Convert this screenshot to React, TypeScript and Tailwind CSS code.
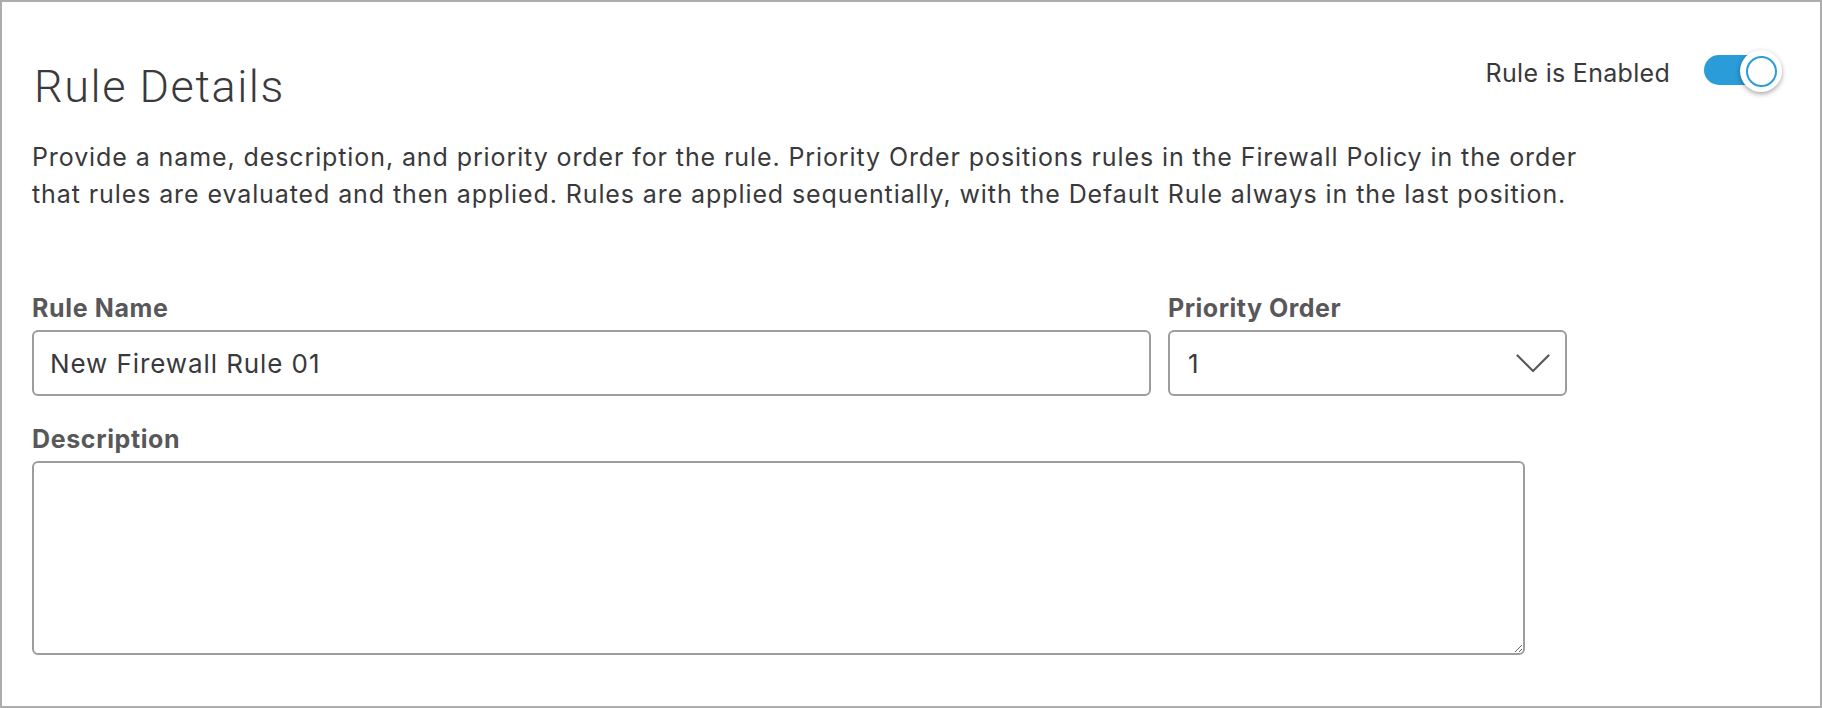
import React from "react";

export default function App() {
  return (
    <div className="w-[1822px] h-[708px] box-border border-2 border-[#adadad] bg-white pl-[30px] pt-[62px] font-['Inter','Liberation_Sans',Arial,sans-serif] text-[#39393b]">
      <div className="flex items-start justify-between pr-[38px]">
        <h1 className="font-['Roboto',sans-serif] font-light text-[45px] leading-[45px] tracking-[0.035em] text-[#3a3a3c] pl-[2px]">
          Rule Details
        </h1>
        <div className="flex items-center -mt-[14px]">
          <span className="text-[25px] leading-[30px] mt-[3px] tracking-[0.012em]">Rule is Enabled</span>
          <div className="relative ml-[34px] w-[78px] h-[42px]">
            <div className="absolute left-0 top-[5px] w-[66px] h-[30px] rounded-full bg-[#2a9cd8]" />
            <div className="absolute right-0 top-0 w-[42px] h-[42px] rounded-full bg-white shadow-[0_2px_5px_rgba(0,0,0,0.35)] flex items-center justify-center">
              <div className="w-[31px] h-[31px] rounded-full border-2 border-[#2a9cd8]" />
            </div>
          </div>
        </div>
      </div>

      <p className="mt-[30px] text-[25px] leading-[37px] tracking-[0.9px]">
        Provide a name, description, and priority order for the rule. Priority Order positions rules in the Firewall Policy in the order
        <br />
        that rules are evaluated and then applied. Rules are applied sequentially, with the Default Rule always in the last position.
      </p>

      <div className="mt-[80px] flex gap-[17px]">
        <div className="w-[1119px]">
          <div className="text-[25px] leading-[30px] font-bold tracking-[0.025em] text-[#58585a] mb-[7px]">Rule Name</div>
          <div className="h-[66px] box-border border-2 border-[#9d9d9d] rounded-[6px] px-[16px] flex items-center text-[26px] tracking-[0.035em]">
            New Firewall Rule 01
          </div>
        </div>
        <div className="w-[399px]">
          <div className="text-[25px] leading-[30px] font-bold tracking-[0.02em] text-[#58585a] mb-[7px]">Priority Order</div>
          <div className="h-[66px] box-border border-2 border-[#9d9d9d] rounded-[6px] pl-[18px] pr-[15px] flex items-center justify-between text-[26px]">
            <span>1</span>
            <svg width="34" height="19" viewBox="0 0 34 19" fill="none">
              <polyline points="1.5,1.5 17,17 32.5,1.5" stroke="#58585a" strokeWidth="2.2" strokeLinecap="round" strokeLinejoin="round" />
            </svg>
          </div>
        </div>
      </div>

      <div className="mt-[28px]">
        <div className="text-[25px] leading-[30px] font-bold tracking-[0.025em] text-[#58585a] mb-[7px]">Description</div>
        <textarea className="block w-[1493px] h-[194px] box-border border-2 border-[#9d9d9d] rounded-[6px] bg-white outline-none" />
      </div>
    </div>
  );
}
